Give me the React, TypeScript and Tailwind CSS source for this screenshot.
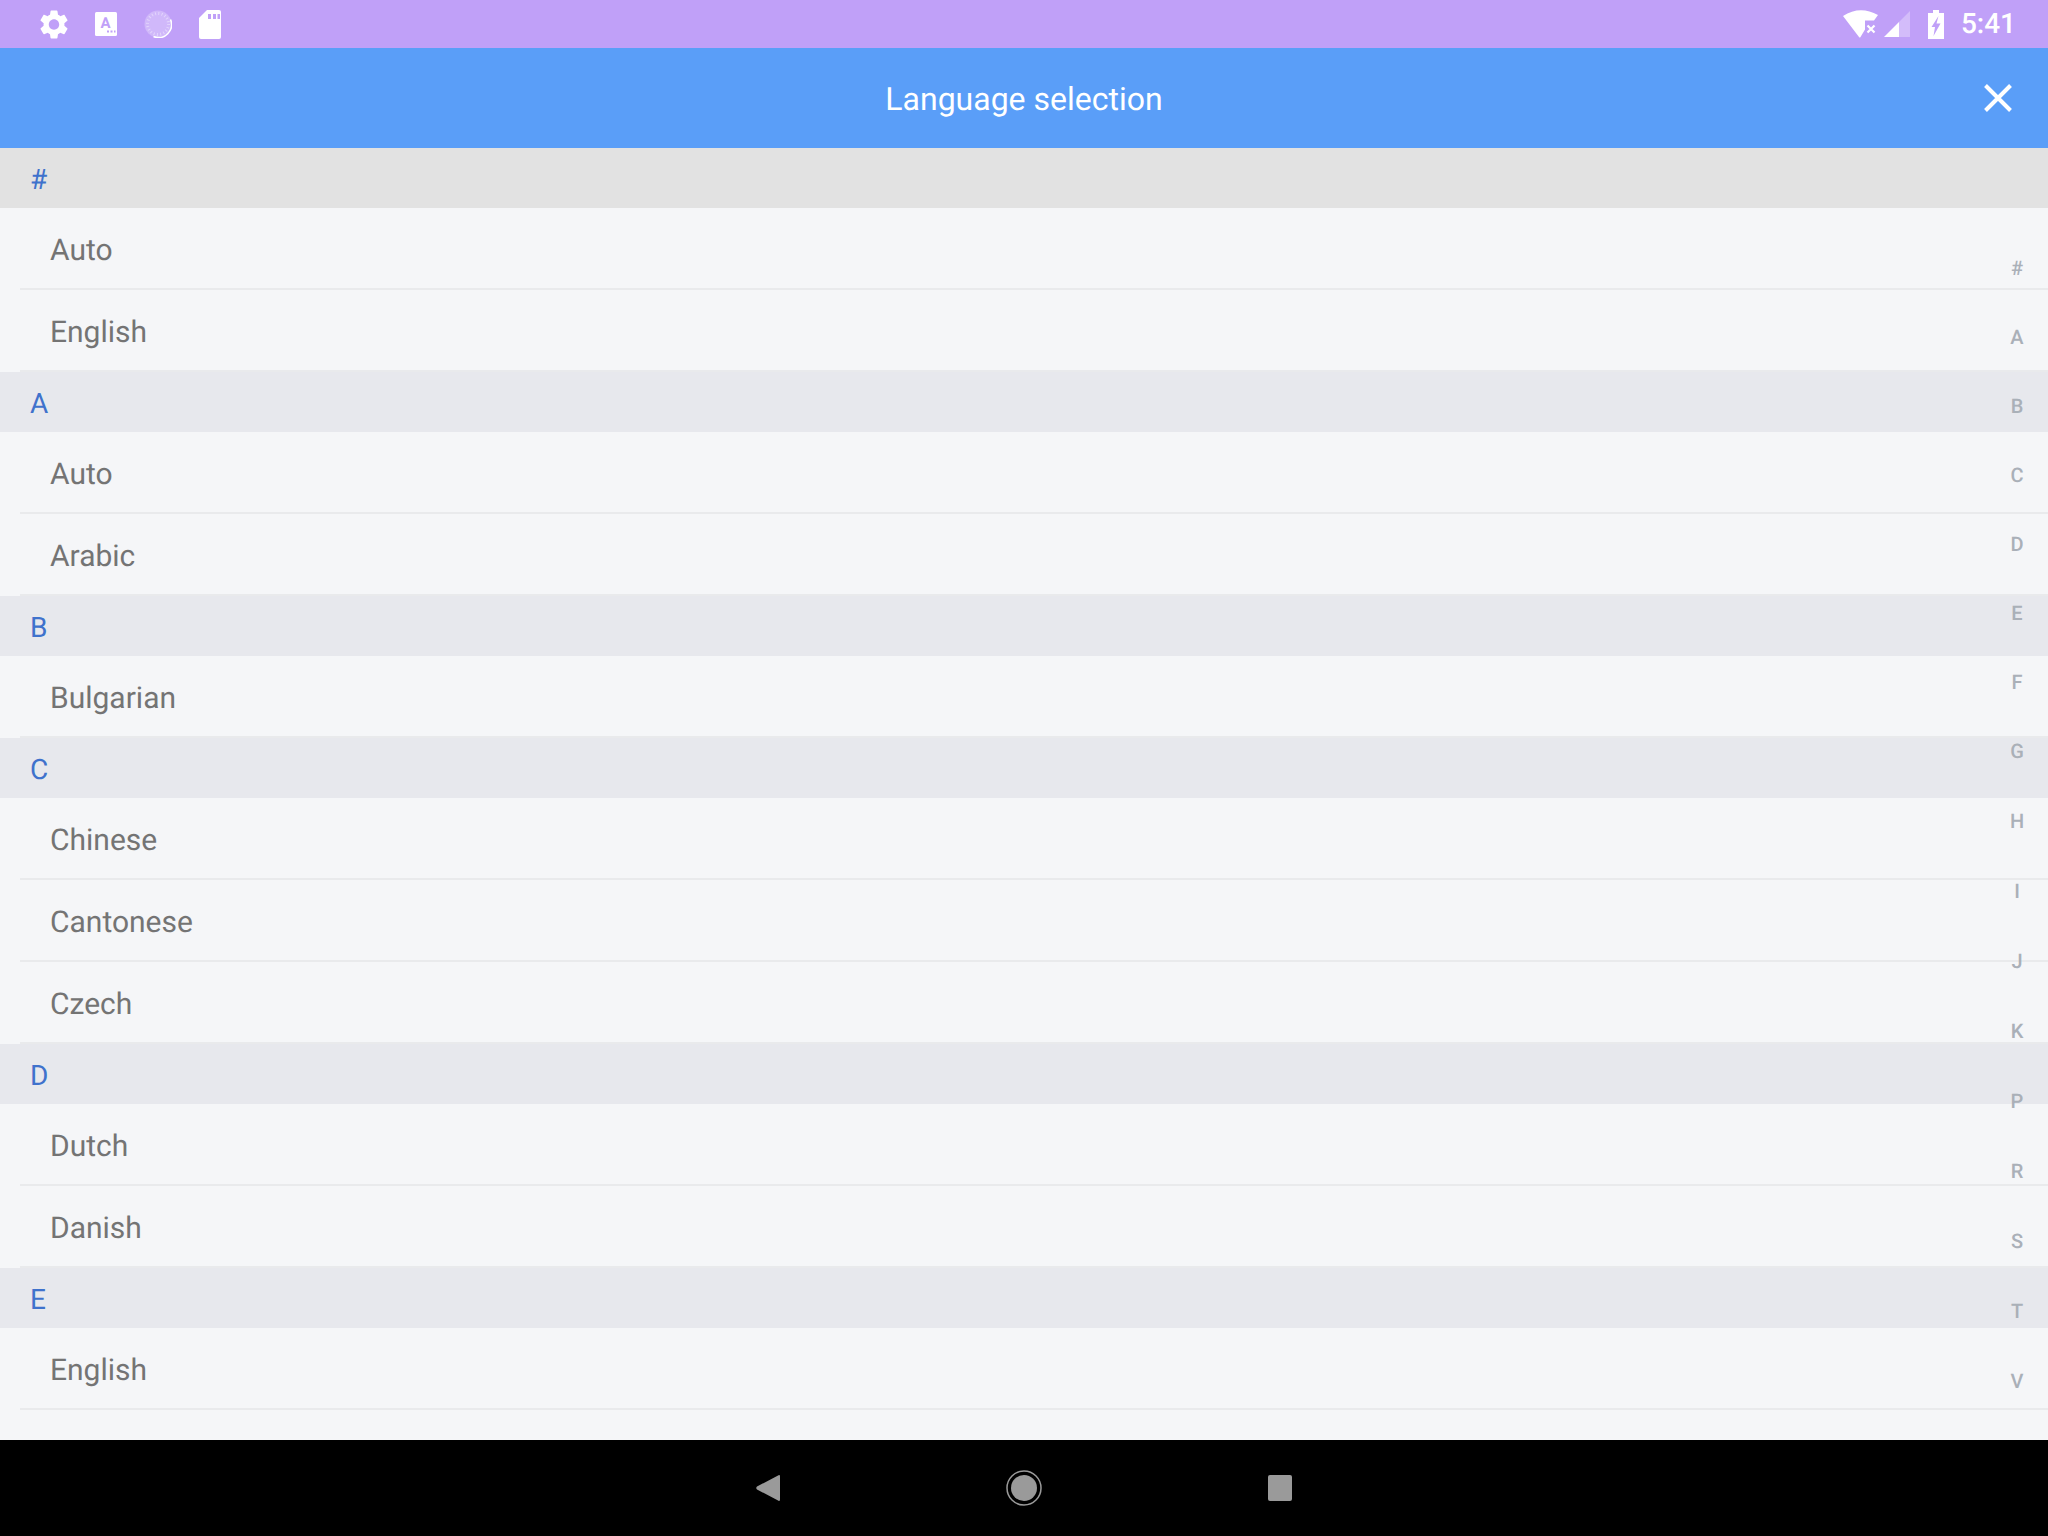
import React from 'react';

type Section = { letter: string; items: string[] };

const sections: Section[] = [
  { letter: '#', items: ['Auto', 'English'] },
  { letter: 'A', items: ['Auto', 'Arabic'] },
  { letter: 'B', items: ['Bulgarian'] },
  { letter: 'C', items: ['Chinese', 'Cantonese', 'Czech'] },
  { letter: 'D', items: ['Dutch', 'Danish'] },
  { letter: 'E', items: ['English'] },
];

const indexLetters = ['#', 'A', 'B', 'C', 'D', 'E', 'F', 'G', 'H', 'I', 'J', 'K', 'P', 'R', 'S', 'T', 'V'];

const GEAR =
  'M19.14 12.94c.04-.3.06-.61.06-.94 0-.32-.02-.64-.07-.94l2.03-1.58c.18-.14.23-.41.12-.61l-1.92-3.32c-.12-.22-.37-.29-.59-.22l-2.39.96c-.5-.38-1.03-.7-1.62-.94l-.36-2.54c-.04-.24-.24-.41-.48-.41h-3.84c-.24 0-.43.17-.47.41l-.36 2.54c-.59.24-1.13.57-1.62.94l-2.39-.96c-.22-.08-.47 0-.59.22L2.74 8.87c-.12.21-.08.47.12.61l2.03 1.58c-.05.3-.09.63-.09.94s.02.64.07.94l-2.03 1.58c-.18.14-.23.41-.12.61l1.92 3.32c.12.22.37.29.59.22l2.39-.96c.5.38 1.03.7 1.62.94l.36 2.54c.05.24.24.41.48.41h3.84c.24 0 .44-.17.47-.41l.36-2.54c.59-.24 1.13-.56 1.62-.94l2.39.96c.22.08.47 0 .59-.22l1.92-3.32c.12-.22.07-.47-.12-.61l-2.01-1.58zM12 15.6c-1.98 0-3.6-1.62-3.6-3.6s1.62-3.6 3.6-3.6 3.6 1.62 3.6 3.6-1.62 3.6-3.6 3.6z';

const StatusBar = () => (
  <div className="h-[48px] shrink-0 flex items-center justify-between bg-[#c0a0f8] pl-[40px] pr-[32px]">
    <div className="flex items-center gap-[27px]">
      <svg width="28" height="29" viewBox="2.4 2 19.2 20" fill="white">
        <path d={GEAR} />
      </svg>
      <svg width="22" height="24" viewBox="0 0 22 24">
        <rect width="22" height="24" rx="1.5" fill="white" />
        <text x="10.5" y="16" textAnchor="middle" fontSize="15" fontWeight="700" fontFamily="Roboto, sans-serif" fill="#c0a0f8">A</text>
        <path d="M12 19.5h2M15.5 19.5h2M19 19.5h1.5" stroke="#c0a0f8" strokeWidth="2" />
      </svg>
      <svg width="28" height="28" viewBox="0 0 28 28" fill="none">
        <circle cx="14" cy="14" r="13.5" fill="white" fillOpacity="0.25" />
        <circle cx="14" cy="14" r="10.5" stroke="white" strokeOpacity="0.4" strokeWidth="3" strokeDasharray="1 2.3" />
        <path d="M26.5 9.5A13 13 0 0 1 9.5 26.5" stroke="white" strokeWidth="1.6" />
      </svg>
      <svg width="22" height="29" viewBox="0 0 22 29" fill="white">
        <path d="M8 0h12a2 2 0 0 1 2 2v25a2 2 0 0 1-2 2H2a2 2 0 0 1-2-2V8z" />
        <path d="M9 4h3v5H9zM14 4h3v5h-3zM18.5 4H21v5h-2.500z" fill="#c0a0f8" />
      </svg>
    </div>
    <div className="flex items-center">
      <svg width="36" height="28" viewBox="0 0 36 28" fill="white">
        <path d="M0 6Q17-5 35 5L31 10.500H22V19.500L17.500 27Q16.800 28 16 27z" />
        <path d="M24.500 15.500l7 7M31.500 15.500l-7 7" stroke="white" strokeWidth="2.200" />
      </svg>
      <svg className="ml-[5px]" width="26" height="26" viewBox="0 0 26 26">
        <path d="M0 26L15 11V26z" fill="white" />
        <path d="M15 11L26 0V26H15z" fill="white" fillOpacity="0.3" />
      </svg>
      <svg className="ml-[18px]" width="16" height="29" viewBox="0 0 16 29">
        <path d="M5 0h6v3h5v26H0V3h5z" fill="white" />
        <path d="M10.500 6L3.500 17H7L5.500 26L12.500 13.500H8.500z" fill="#c0a0f8" />
      </svg>
      <span className="ml-[17px] text-[28px] leading-none font-medium text-white">5:41</span>
    </div>
  </div>
);

const Header = () => (
  <div className="relative h-[100px] shrink-0 flex items-center justify-center pt-[2px] bg-[#5a9ef8]">
    <span className="text-[32px] text-white">Language selection</span>
    <svg className="absolute right-[36px] top-[36px]" width="28" height="28" viewBox="0 0 28 28" stroke="white" strokeWidth="4">
      <path d="M1.500 1.500L26.500 26.500M26.500 1.500L1.500 26.500" />
    </svg>
  </div>
);

const LanguageList = () => (
  <div className="relative flex-1 overflow-hidden bg-[#f5f6f8]">
    {sections.map((section, i) => (
      <div key={section.letter}>
        <div className={`h-[60px] flex items-center pl-[30px] pt-[3px] text-[28px] text-[#3f72cc] ${i === 0 ? 'bg-[#e2e2e2]' : 'bg-[#e7e8ed]'}`}>
          {section.letter}
        </div>
        {section.items.map((item) => (
          <div key={item} className="pl-[20px]">
            <div className="h-[82px] flex items-center pl-[30px] pt-[5px] border-b-2 border-[#e9eaec] text-[30px] text-[#747474]">
              {item}
            </div>
          </div>
        ))}
      </div>
    ))}
    {/* index rows are not evenly spaced in the picture: 69px up to F, 70px after */}
    <div className="absolute top-[85px] right-0 w-[62px] flex flex-col">
      {indexLetters.map((l, i) => (
        <div key={l} className={`${i < 7 ? 'h-[69px]' : 'h-[70px]'} flex items-center justify-center text-[20px] font-medium text-[#aab0b8]`}>
          {l}
        </div>
      ))}
    </div>
  </div>
);

const NavBar = () => (
  <div className="h-[96px] shrink-0 flex items-center justify-center bg-black">
    <div className="w-[256px] flex justify-center">
      <svg width="24" height="26" viewBox="0 0 24 26" fill="#9a9a9a">
        <path d="M22.500 0.300Q24 -0.500 24 1.500V24.500Q24 26.500 22.500 25.700L1 14.500Q-0.500 13 1 11.500z" />
      </svg>
    </div>
    <div className="w-[256px] flex justify-center">
      <svg width="36" height="36" viewBox="0 0 36 36" fill="none">
        <circle cx="18" cy="18" r="17" stroke="#9a9a9a" strokeWidth="1.500" />
        <circle cx="18" cy="18" r="13" fill="#9a9a9a" />
      </svg>
    </div>
    <div className="w-[256px] flex justify-center">
      <div className="w-[24px] h-[26px] rounded-[2px] bg-[#9a9a9a]" />
    </div>
  </div>
);

export default function App() {
  return (
    <div className="w-[2048px] h-[1536px] flex flex-col overflow-hidden font-['Roboto',sans-serif] [text-rendering:geometricPrecision]">
      <StatusBar />
      <Header />
      <LanguageList />
      <NavBar />
    </div>
  );
}
